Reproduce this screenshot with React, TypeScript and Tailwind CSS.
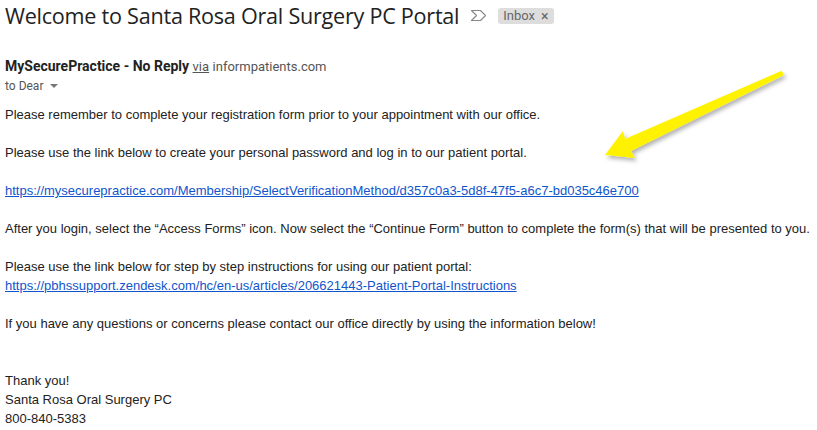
export default function App() {
  return (
    <div className="relative w-[817px] h-[430px] bg-white overflow-hidden font-['Liberation_Sans',Arial,sans-serif] text-[13px] text-[#222]">
      {/* Subject */}
      <div className="flex items-center pl-[5px] pt-[1px] h-[30px]">
        <h1 className="font-['Open_Sans',Roboto,sans-serif] text-[21.6px] leading-[30px] text-[#222] tracking-[-0.25px]">
          Welcome to Santa Rosa Oral Surgery PC Portal
        </h1>
        <svg className="ml-[11px]" width="17" height="13" viewBox="0 0 17 13">
          <path d="M1.5 1.5 H10.5 L15.5 6.5 L10.5 11.5 H1.5 L6.5 6.5 Z" fill="none" stroke="#888" strokeWidth="1.2" strokeLinejoin="round" />
        </svg>
        <span className="ml-[11px] flex items-center gap-[6px] bg-[#ddd] rounded-[3px] px-[5px] h-[16px] text-[13px] leading-none text-[#666] font-['Roboto',sans-serif]">
          Inbox <span className="text-[14px] leading-none">×</span>
        </span>
      </div>

      {/* Sender */}
      <div className="pl-[5px] mt-[27px] font-['Roboto',sans-serif] text-[14px] leading-[18px]">
        <span className="font-bold text-[#222]">MySecurePractice - No Reply</span>{" "}
        <span className="underline text-[#555] text-[13px]">via</span>{" "}
        <span className="text-[#555] text-[13px]">informpatients.com</span>
      </div>
      <div className="pl-[5px] mt-[1px] flex items-center font-['Roboto',sans-serif] text-[12px] leading-[18px] text-[#555]">
        to Dear
        <svg className="ml-[6px]" width="10" height="6" viewBox="0 0 10 6">
          <path d="M1 1 L5 5 L9 1 Z" fill="#777" />
        </svg>
      </div>

      {/* Body */}
      <div className="pl-[5px] mt-[10px] leading-[19px]">
        <p>Please remember to complete your registration form prior to your appointment with our office.</p>
        <p className="mt-[19px]">Please use the link below to create your personal password and log in to our patient portal.</p>
        <p className="mt-[19px]">
          <a className="text-[#1155cc] underline">
            https://mysecurepractice.com/Membership/SelectVerificationMethod/d357c0a3-5d8f-47f5-a6c7-bd035c46e700
          </a>
        </p>
        <p className="mt-[19px]">
          After you login, select the “Access Forms” icon. Now select the “Continue Form” button to complete the form(s) that will be presented to you.
        </p>
        <p className="mt-[19px]">Please use the link below for step by step instructions for using our patient portal:</p>
        <p>
          <a className="text-[#1155cc] underline">
            https://pbhssupport.zendesk.com/hc/en-us/articles/206621443-Patient-Portal-Instructions
          </a>
        </p>
        <p className="mt-[19px]">If you have any questions or concerns please contact our office directly by using the information below!</p>
        <p className="mt-[38px]">Thank you!</p>
        <p>Santa Rosa Oral Surgery PC</p>
        <p>800-840-5383</p>
      </div>

      {/* Annotation arrow */}
      <svg className="absolute left-[590px] top-[62px]" width="210" height="110" viewBox="0 0 210 110">
        <defs>
          <filter id="sh" x="-20%" y="-20%" width="140%" height="140%">
            <feDropShadow dx="2" dy="3" stdDeviation="2" floodColor="#000" floodOpacity="0.3" />
          </filter>
        </defs>
        <path
          d="M191 9 Q193 10 194 13 L41 89 L45 96 L15 93 L33 69 L35 77 Z"
          fill="#fff200"
          filter="url(#sh)"
        />
      </svg>
    </div>
  );
}
